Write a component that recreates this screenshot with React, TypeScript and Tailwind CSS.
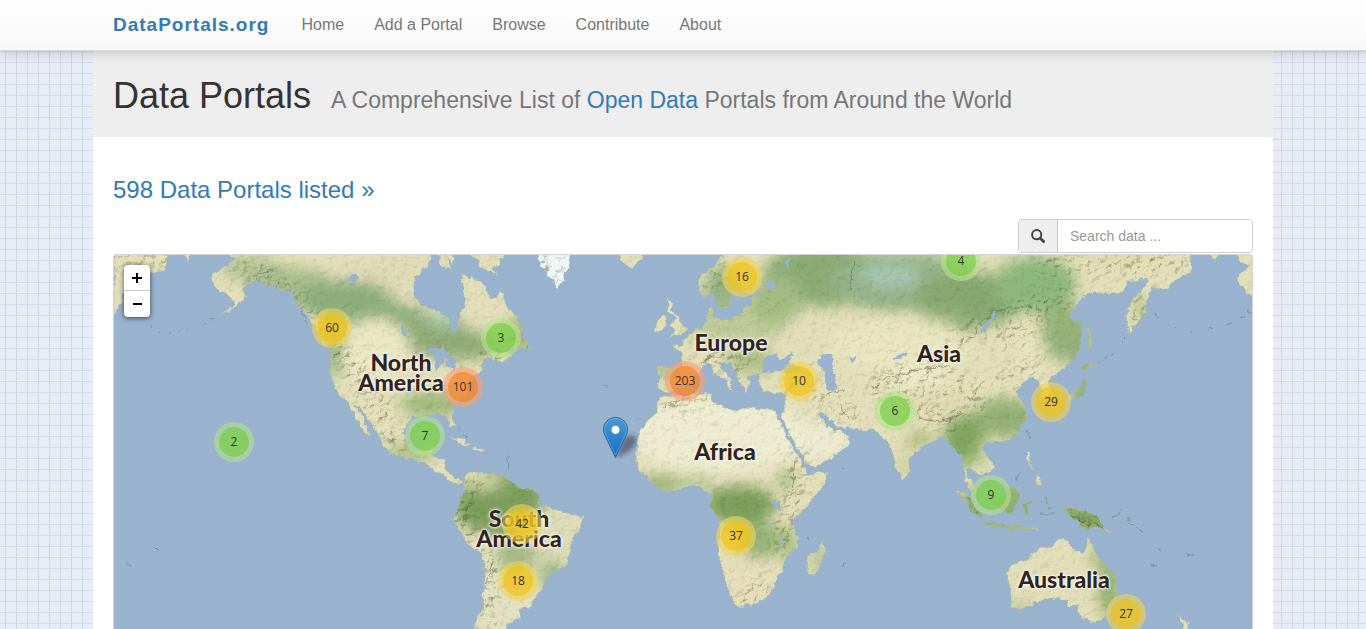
import clsx from "clsx";

const navLinks = ["Home", "Add a Portal", "Browse", "Contribute", "About"];

type Cluster = { count: number; x: number; y: number };

// centre of every cluster, in map pixels
const clusters: Cluster[] = [
	{ count: 60, x: 218, y: 73 },
	{ count: 3, x: 387, y: 83 },
	{ count: 101, x: 349, y: 132 },
	{ count: 7, x: 311, y: 181 },
	{ count: 2, x: 120, y: 187 },
	{ count: 42, x: 408, y: 269 },
	{ count: 18, x: 404, y: 326 },
	{ count: 16, x: 628, y: 22 },
	{ count: 203, x: 571, y: 126 },
	{ count: 10, x: 685, y: 126 },
	{ count: 37, x: 622, y: 281 },
	{ count: 4, x: 847, y: 6 },
	{ count: 6, x: 781, y: 156 },
	{ count: 29, x: 937, y: 147 },
	{ count: 9, x: 877, y: 240 },
	{ count: 27, x: 1012, y: 359 },
];

const labels = [
	{ lines: ["North", "America"], x: 287, y: 117 },
	{ lines: ["South", "America"], x: 405, y: 273 },
	{ lines: ["Europe"], x: 617, y: 87 },
	{ lines: ["Africa"], x: 611, y: 196 },
	{ lines: ["Asia"], x: 825, y: 98 },
	{ lines: ["Australia"], x: 950, y: 324 },
];

const greenland = "M535 250L542 267L550 278L558 288L563 280L568 265L571 250Z";

const land = [
	// North and Central America
	"M225 250L235 260L227 265L213 273L212 282L220 292L233 297L235 305L217 318L238 306L247 295L243 288L253 280L262 282L277 288L290 293L300 307L310 320L320 340L330 350L330 370L332 380L340 397L348 402L353 413L363 430L371 436L369 430L363 417L357 410L355 405L362 410L370 423L380 437L383 445L395 455L410 459L425 463L435 472L443 476L453 482L462 485L462 481L453 477L445 470L446 460L438 457L430 456L436 446L424 447L416 452L407 447L404 435L407 423L412 417L427 417L437 413L447 417L450 427L454 427L453 417L450 407L460 400L467 390L473 376L483 370L480 365L490 358L502 362L512 356L505 352L520 347L532 350L523 337L522 325L517 317L507 307L500 290L497 300L490 297L485 287L480 280L463 275L463 293L467 303L458 317L458 332L453 332L448 317L433 310L420 305L413 293L415 278L423 270L430 263L435 250Z",
	"M437 250L440 266L452 268L447 260L454 264L452 250Z",
	"M468 250L478 263L490 272L497 276L492 268L500 264L506 250Z",
	"M620 250L620 260L628 266L632 268L643 260L643 250Z",
	"M114 250L170 250L165 270L150 275L140 280L125 290L120 305L114 318Z",
	"M182 250L188 261L194 250Z",
	// Caribbean
	"M447 438L460 439L472 446L460 443Z",
	"M473 447L485 449L484 452L474 450Z",
	// South America
	"M462 484L468 473L480 472L490 475L503 476L510 480L520 488L537 492L540 503L553 508L567 513L582 518L583 525L573 537L570 550L565 567L550 573L543 587L537 595L530 608L518 610L520 618L508 623L503 640L473 640L475 620L482 607L483 590L485 563L483 555L470 547L460 533L453 518L457 510L463 497L465 487Z",
	// Africa
	"M657 403L663 396L680 394L700 393L713 392L712 402L725 407L737 413L743 407L777 410L777 415L787 437L797 453L805 468L807 473L828 472L823 487L807 507L793 520L797 533L798 547L783 560L783 573L775 580L770 593L760 603L738 608L733 600L727 587L722 567L717 553L720 533L720 520L710 507L712 495L703 490L693 485L680 490L662 491L652 483L637 467L636 453L637 440L645 423L657 412Z",
	"M823 540L826 550L815 577L807 575L808 557L820 548Z",
	// Eurasia
	"M658 367L658 388L667 392L680 390L690 384L700 373L702 365L708 363L715 373L728 383L727 388L731 388L732 380L723 370L718 362L725 360L737 373L740 383L747 392L750 383L748 377L757 373L760 378L760 383L762 392L777 393L787 392L785 402L781 417L793 440L807 465L813 467L833 458L850 443L850 437L840 430L833 432L825 423L820 413L823 413L837 427L873 430L888 443L892 453L897 470L902 479L910 473L910 457L930 442L943 437L948 443L955 450L963 457L965 482L972 493L980 501L977 491L970 482L967 473L968 468L983 475L992 470L993 463L983 450L985 443L997 442L1013 437L1027 420L1027 407L1017 393L1022 385L1030 377L1040 382L1043 398L1051 396L1048 380L1063 368L1075 357L1082 347L1083 330L1080 322L1068 317L1077 305L1088 293L1110 293L1123 292L1127 283L1148 277L1145 287L1130 303L1126 317L1129 333L1135 325L1145 312L1146 300L1152 288L1167 287L1187 273L1192 270L1190 260L1193 250L725 250L713 267L700 277L698 287L703 298L715 293L720 308L725 310L730 305L733 293L738 285L745 294L763 293L752 298L752 305L745 308L740 317L723 320L713 317L712 305L707 307L707 322L700 328L683 338L682 345L672 347L682 353L682 368L667 367Z",
	"M1207 250L1214 261L1218 250Z",
	"M1233 250L1240 262L1250 266L1238 277L1237 282L1245 290L1252 296L1260 296L1260 250Z",
	"M668 300L673 303L672 310L680 320L687 328L685 333L670 337L675 330L670 325L675 318L668 312Z",
	"M662 315L667 318L663 330L655 332L657 322Z",
	// Japan and Sakhalin
	"M1088 360L1095 367L1087 371L1082 369Z",
	"M1083 377L1087 383L1083 396L1070 401L1068 397L1080 388Z",
	"M1088 325L1092 340L1089 353L1087 340Z",
	// South East Asia
	"M955 489L967 493L977 507L983 519L973 513L963 500Z",
	"M983 521L1008 525L1040 528L1038 530L1010 529L984 525Z",
	"M1013 485L1019 490L1018 500L1012 513L1000 512L993 500L1003 497Z",
	"M1023 503L1037 501L1027 506L1031 514L1027 512L1026 518L1023 512Z",
	"M1026 451L1030 453L1029 463L1035 470L1030 466L1026 459Z",
	"M1035 479L1041 477L1042 486L1037 485Z",
	"M1057 507L1063 508L1073 509L1086 511L1097 516L1103 525L1111 534L1097 527L1087 529L1077 527L1080 522L1068 515Z",
	// Australia and New Zealand
	"M1088 537L1093 547L1097 557L1107 565L1117 580L1119 593L1110 610L1103 620L1090 622L1080 617L1077 603L1070 607L1067 602L1053 597L1037 602L1020 610L1012 607L1010 587L1007 573L1013 565L1030 557L1043 545L1052 547L1057 538L1068 540L1070 547L1082 555L1086 547Z",
	"M1177 612L1183 620L1190 622L1183 640L1178 640L1182 624Z",
];

const water = [
	"M763 373L762 362L767 355L775 354L780 360L788 356L795 352L789 361L797 367L805 374L790 373L780 371Z",
	"M817 360L825 353L833 353L831 363L837 383L835 391L825 390L825 378Z",
	"M433 355L442 345L450 352L444 362L436 372L434 362Z",
	"M446 356L457 360L452 373Z",
	"M424 352L432 346L440 350L430 354Z",
	"M978 332L985 325L994 311L996 314L988 328L980 334Z",
	"M774 503L780 502L780 510L773 510Z",
	"M348 278L356 274L360 277L352 284Z",
	"M401 321L405 330L407 338L402 333Z",
	"M766 284L774 280L777 287L770 291Z",
	"M767 515L771 528L769 527Z",
	"M780 530L783 545L781 543Z",
	"M850 357L856 355L854 364Z",
	"M893 357L908 353L906 356L893 360Z",
	"M785 262L793 258L788 268Z",
];

// vegetation: cx, cy, rx, ry, colour
const patches: [number, number, number, number, string][] = [
	[250, 268, 30, 12, "#b5c495"],
	[400, 275, 45, 25, "#e0dcb8"],
	[290, 285, 42, 18, "#a8bd8d"],
	[345, 300, 48, 20, "#8eae7f"],
	[385, 316, 40, 14, "#90af80"],
	[420, 328, 46, 14, "#90ae7c"],
	[455, 345, 48, 15, "#90ac76"],
	[443, 320, 12, 8, "#acccae"],
	[335, 340, 9, 38, "#8ead7b"],
	[376, 350, 34, 32, "#ebe8c6"],
	[432, 404, 32, 14, "#a3ba7e"],
	[412, 452, 26, 8, "#a5bb7c"],
	[520, 335, 16, 20, "#a7bb82"],
	[500, 505, 46, 34, "#7c9f5c"],
	[484, 483, 20, 8, "#cbd09c"],
	[552, 535, 30, 25, "#dcdcb8"],
	[474, 548, 9, 18, "#e2e0bd"],
	[516, 556, 20, 18, "#a6bb87"],
	[552, 575, 12, 16, "#9eb882"],
	[500, 603, 28, 30, "#e2e1c2"],
	[720, 435, 90, 38, "#eeedd2"],
	[820, 440, 30, 22, "#ecead0"],
	[740, 505, 36, 20, "#7ca05c"],
	[660, 484, 20, 8, "#8fae6d"],
	[695, 482, 20, 6, "#a9bf84"],
	[760, 540, 22, 18, "#98b477"],
	[790, 545, 8, 22, "#a9be84"],
	[745, 580, 22, 18, "#e6debc"],
	[785, 480, 7, 10, "#9cb577"],
	[820, 560, 8, 20, "#b4c594"],
	[722, 290, 18, 26, "#99b383"],
	[735, 325, 50, 18, "#c0cb98"],
	[750, 360, 24, 14, "#adbe85"],
	[668, 372, 12, 8, "#9db680"],
	[825, 275, 62, 32, "#8cac76"],
	[775, 300, 28, 24, "#a5bb84"],
	[900, 282, 70, 30, "#94b287"],
	[890, 276, 30, 12, "#a6c7b2"],
	[970, 300, 52, 28, "#86a871"],
	[1035, 285, 42, 28, "#8eb77d"],
	[945, 325, 28, 18, "#96b179"],
	[900, 345, 70, 28, "#e9e6c1"],
	[1065, 333, 26, 28, "#96b279"],
	[1030, 350, 14, 28, "#e6e2bf"],
	[920, 380, 30, 12, "#ecebcd"],
	[935, 400, 38, 15, "#dfdcb4"],
	[1005, 418, 32, 20, "#94b074"],
	[963, 440, 20, 26, "#81a55f"],
	[980, 460, 8, 8, "#bdcb93"],
	[920, 440, 14, 8, "#a9bd7c"],
	[905, 465, 6, 14, "#c5cd98"],
	[1120, 250, 50, 12, "#e1dab0"],
	[1110, 588, 12, 32, "#98b374"],
	[1098, 555, 6, 14, "#a3b77c"],
	[1020, 608, 12, 6, "#b8c492"],
	[1005, 508, 50, 26, "#91b076"],
	[1085, 518, 32, 14, "#7ea35c"],
	[1083, 380, 12, 60, "#94ad7b"],
	[1140, 308, 8, 14, "#bcc791"],
];

// strong relief follows these ranges
const ranges = [
	"M240 268C280 285 300 300 322 330C340 360 372 380 385 430",
	"M355 360L378 400L400 450",
	"M472 480L457 515L484 555L492 580L486 629",
	"M700 285L722 258",
	"M665 402L708 397M702 362L722 356L745 375",
	"M785 385L815 382L830 410L862 420",
	"M870 390L895 385L910 405L950 420L965 415M880 375L910 372L950 360M920 385L960 385L985 410",
	"M950 345L990 325L1040 305L1075 295M1040 265L1160 265L1190 260",
	"M795 450L797 480L785 520L780 550M765 585L740 604",
	"M1000 340L1050 325M1000 385L1040 360",
	"M1065 512L1108 532M957 490L981 516M1130 330L1145 300",
	"M480 365L530 340",
	"M114 260L168 255M540 250L555 285",
];

// crest lines inside the ranges
const ridges =
	"M464 510L470 500L476 492L484 482M485 590L489 575L494 560M482 610L486 597M456 515L460 505M878 382L890 376L902 374L914 370L930 368L950 366M872 388L882 384M915 414L925 420L940 422L952 418L962 412M910 405L905 398M850 290L852 275L854 262M975 330L984 320L994 311L1010 308L1026 306M700 363L706 358L716 357L724 354M820 395L834 392L845 390M840 405L848 420M985 380L976 390L973 400M1068 516L1085 518L1098 524L1106 532M796 460L794 480L790 500M470 410L476 402M272 270L260 274L250 286M663 408L675 402L690 396";

const islets =
	"M150 325l2 3M158 330l3 1M168 332l2 0M178 331l3 -1M186 329l2 -1M203 325l3 -2M210 321l5 -3M1126 338l-4 4M1116 352l-5 3M1108 356l-6 4M1100 361l-3 2M1155 314l2 3M1175 326l2 2M1192 331l2 0M1210 329l3 -1M1228 324l3 -1M1240 318l4 -2M1248 313l4 -2M1112 517l6 -2 4 -6M1126 519l8 6M1136 526l7 7M1157 547l4 5M1150 563l7 5M1188 556l6 -1M1040 514l15 0M1046 498l1 5M1027 430l3 8M1021 473l-6 8M1047 508l5 -1M125 562l7 6M155 547l3 3M305 320l3 5M300 310l5 8M508 455l1 15M460 427l3 3M463 435l3 2M842 468l2 1M807 537l2 1M841 566l4 -2M605 385l2 1M633 420l8 -2";

const WorldMap = () => (
	<svg
		className="absolute inset-0 h-full w-full"
		viewBox="114 255 1138 374"
		preserveAspectRatio="xMidYMin slice"
		aria-hidden="true"
	>
		<defs>
			<clipPath id="land">
				{land.map((d) => (
					<path key={d} d={d} />
				))}
				<path d={greenland} />
			</clipPath>
			<filter id="blur" x="-50%" y="-50%" width="200%" height="200%">
				<feGaussianBlur stdDeviation="7" />
			</filter>
			<filter id="coast" x="0" y="0" width="100%" height="100%">
				<feTurbulence type="fractalNoise" baseFrequency="0.14" numOctaves="3" seed="4" />
				<feDisplacementMap in="SourceGraphic" scale="7" xChannelSelector="R" yChannelSelector="G" />
			</filter>
			<filter id="relief" x="0" y="0" width="100%" height="100%" colorInterpolationFilters="sRGB">
				<feTurbulence type="fractalNoise" baseFrequency="0.13 0.17" numOctaves="4" seed="9" />
				<feDiffuseLighting surfaceScale="3" diffuseConstant="1.25" lightingColor="#fffff4">
					<feDistantLight azimuth="225" elevation="58" />
				</feDiffuseLighting>
			</filter>
			<mask id="mountains">
				<rect x="114" y="250" width="1138" height="390" fill="#1f1f1f" />
				<g filter="url(#blur)" fill="none" stroke="#aaa" strokeWidth="16">
					{ranges.map((d) => (
						<path key={d} d={d} />
					))}
				</g>
			</mask>
		</defs>
		<rect x="114" y="250" width="1138" height="390" fill="#99b2cd" />
		<g filter="url(#coast)">
			<rect x="114" y="240" width="1138" height="400" fill="#99b2cd" />
			<g clipPath="url(#land)">
				<rect x="114" y="240" width="1138" height="400" fill="#e3dfba" />
				<g filter="url(#blur)">
					{patches.map(([cx, cy, rx, ry, fill]) => (
						<ellipse key={`${cx}-${cy}`} cx={cx} cy={cy} rx={rx} ry={ry} fill={fill} />
					))}
				</g>
				<path d="M530 250H575V290H545Z" fill="#eef7f6" />
				<g className="mix-blend-multiply" mask="url(#mountains)">
					<rect x="114" y="250" width="1138" height="390" filter="url(#relief)" />
				</g>
				<path d={ridges} fill="none" stroke="#55604a" strokeOpacity="0.5" />
			</g>
			<g fill="none" stroke="#a3b9a8" strokeOpacity="0.5">
				{land.map((d) => (
					<path key={d} d={d} />
				))}
			</g>
			<g fill="#99b2cd">
				{water.map((d) => (
					<path key={d} d={d} />
				))}
			</g>
			<path d={islets} fill="none" stroke="#71877f" strokeOpacity="0.7" />
		</g>
	</svg>
);

const Pin = () => (
	<svg className="absolute top-[162px] left-[489px]" width="45" height="42" viewBox="0 0 45 42">
		<defs>
			<linearGradient id="pin" x1="0" y1="0" x2="0" y2="1">
				<stop offset="0" stopColor="#4a9bd4" />
				<stop offset="1" stopColor="#126fc6" />
			</linearGradient>
			<filter id="pin-shadow" x="-30%" y="-30%" width="160%" height="160%">
				<feGaussianBlur stdDeviation="2" />
			</filter>
		</defs>
		<path d="M13 41L20 23C25 15 36 18 33 26C30 33 22 37 13 41Z" fill="#222" opacity="0.45" filter="url(#pin-shadow)" />
		<path
			d="M12.5 0.5C5.6 0.5 0.5 5.8 0.5 12.3C0.5 15 1.3 17.4 2.6 20L12.5 40.5L22.4 20C23.7 17.4 24.5 15 24.5 12.3C24.5 5.8 19.4 0.5 12.5 0.5Z"
			fill="url(#pin)"
			stroke="#2e6c97"
		/>
		<path
			d="M12.5 1.6C6.2 1.6 1.6 6.3 1.6 12.3C1.6 14.8 2.4 17 3.6 19.5L12.5 38L21.4 19.5C22.6 17 23.4 14.8 23.4 12.3C23.4 6.3 18.8 1.6 12.5 1.6Z"
			fill="none"
			stroke="#fff"
			strokeOpacity="0.2"
		/>
		<circle cx="12.5" cy="12.8" r="4.4" fill="#fff" stroke="#3a7fb4" strokeWidth="0.6" />
	</svg>
);

const ClusterMarker = ({ count, x, y }: Cluster) => (
	<button
		type="button"
		style={{ left: x, top: y }}
		className={clsx(
			"absolute -mt-5 -ml-5 flex size-10 items-center justify-center rounded-full",
			count < 10 && "bg-[#b5e28c]/60",
			count >= 10 && count < 100 && "bg-[#f1d357]/60",
			count >= 100 && "bg-[#fd9c73]/60",
		)}
	>
		<span
			className={clsx(
				"flex size-[30px] items-center justify-center rounded-full font-['Open_Sans',sans-serif] text-xs text-[#333]",
				count < 10 && "bg-[#6ecc39]/60",
				count >= 10 && count < 100 && "bg-[#f0c20c]/60",
				count >= 100 && "bg-[#f18017]/60",
			)}
		>
			{count}
		</span>
	</button>
);

const SearchIcon = () => (
	<svg width="14" height="14" viewBox="0 0 14 14" fill="none" stroke="#444">
		<circle cx="5.7" cy="5.7" r="4.6" strokeWidth="2" />
		<path d="M9.2 9.2L12.6 12.6" strokeWidth="2.8" strokeLinecap="round" />
	</svg>
);

const Nav = () => (
	<nav
		className="relative z-10 border-b border-[#dcdcdc] bg-linear-to-b from-white to-[#f8f8f8] shadow-[0_1px_12px_rgba(0,0,0,0.2)]"
		aria-label="Main navigation"
	>
		<div className="mx-auto flex h-[50px] max-w-[1180px] items-center gap-8 px-5">
			<a href="#" className="text-[19px] font-bold tracking-[1px] text-[#337ab7]">
				DataPortals.org
			</a>
			<ul className="flex gap-[30px] text-base text-[#777]">
				{navLinks.map((name) => (
					<li key={name}>
						<a href="#">{name}</a>
					</li>
				))}
			</ul>
		</div>
	</nav>
);

const PortalMap = () => (
	<div className="relative min-h-[300px] flex-1 overflow-hidden rounded-t border border-b-0 border-[#d4d4d4] bg-[#99b2cd]">
		<WorldMap />
		{labels.map(({ lines, x, y }) => (
			<div
				key={lines.join(" ")}
				style={{ left: x, top: y }}
				className="absolute -translate-x-1/2 -translate-y-1/2 text-center font-['Lato',sans-serif] text-[23px] leading-5 font-black text-[#30241c] [text-shadow:0_0_2px_#fff,0_0_3px_#fff,0_0_4px_#f4f0dc]"
			>
				{lines.map((line) => (
					<div key={line}>{line}</div>
				))}
			</div>
		))}
		<Pin />
		{clusters.map((cluster) => (
			<ClusterMarker key={cluster.count} {...cluster} />
		))}
		<div className="absolute top-2.5 left-2.5 flex w-[26px] flex-col rounded bg-white text-black shadow-[0_1px_5px_rgba(0,0,0,0.65)]">
			<button type="button" aria-label="Zoom in" className="flex h-[26px] items-center justify-center border-b border-[#ccc]">
				<svg width="10" height="10" viewBox="0 0 10 10" stroke="#000" strokeWidth="2">
					<path d="M0 5H10M5 0V10" />
				</svg>
			</button>
			<button type="button" aria-label="Zoom out" className="flex h-[26px] items-center justify-center">
				<svg width="10" height="10" viewBox="0 0 10 10" stroke="#000" strokeWidth="2">
					<path d="M1 5H10" />
				</svg>
			</button>
		</div>
	</div>
);

export default function App() {
	return (
		<div className="flex min-h-screen flex-col bg-[#e8ecf7] bg-[linear-gradient(to_right,#d1d6e4_1px,transparent_1px),linear-gradient(to_bottom,#d6dbe8_1px,transparent_1px)] bg-[size:11px_11px] bg-[position:5px_7px] font-['Liberation_Sans',Arial,sans-serif] text-[#333]">
			<Nav />
			<div className="mx-auto flex w-full max-w-[1180px] flex-1 flex-col bg-white">
				<header className="flex h-[86px] items-center bg-[#eee] px-5 pt-1">
					<h1 className="text-4xl">
						Data Portals
						<small className="ml-5 text-[23px] text-[#777]">
							A Comprehensive List of{" "}
							<a href="#" className="text-[#337ab7]">
								Open Data
							</a>{" "}
							Portals from Around the World
						</small>
					</h1>
				</header>
				<main className="flex flex-1 flex-col px-5 pt-[37px]">
					<h2 className="text-2xl text-[#337ab7]">
						<a href="#">598 Data Portals listed »</a>
					</h2>
					<form className="mt-[13px] mb-px flex h-[34px] w-[235px] self-end overflow-hidden rounded border border-[#ccc]">
						<label htmlFor="search" aria-label="Search" className="flex w-[39px] items-center justify-center border-r border-[#ccc] bg-[#eee]">
							<SearchIcon />
						</label>
						<input
							id="search"
							type="text"
							placeholder="Search data ..."
							className="min-w-0 flex-1 bg-white px-3 text-sm outline-none placeholder:text-[#999]"
						/>
					</form>
					<PortalMap />
				</main>
			</div>
		</div>
	);
}
